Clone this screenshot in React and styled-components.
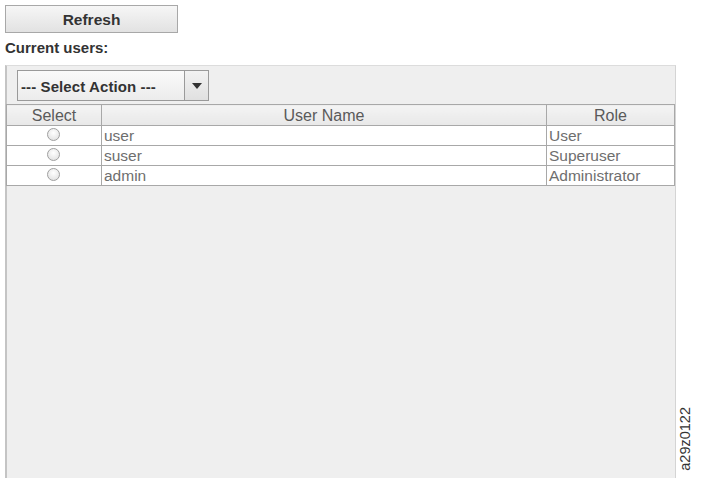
import React from "react";
import styled, { createGlobalStyle } from "styled-components";

const Global = createGlobalStyle`
  html, body { margin: 0; padding: 0; background: #fff; }
  body { font-family: "Liberation Sans", Arial, sans-serif; overflow: hidden; }
`;

const Page = styled.div`
  display: flex;
  width: 701px;
  height: 478px;
  box-sizing: border-box;
`;

const Main = styled.div`
  width: 676px;
  padding: 5px 0 0 5px;
  box-sizing: border-box;
  display: flex;
  flex-direction: column;
`;

const RefreshButton = styled.button`
  width: 173px;
  height: 28px;
  margin: 0;
  border: 1px solid #a8a8a8;
  background: linear-gradient(#f6f6f6, #e2e2e2);
  font: bold 15.5px "Liberation Sans", Arial, sans-serif;
  color: #333;
  padding: 2px 0 0;
`;

const Label = styled.div`
  font: bold 15px "Liberation Sans", Arial, sans-serif;
  color: #333;
  margin: 6px 0 0 0;
  height: 17px;
  line-height: 17px;
`;

const Panel = styled.div`
  margin-top: 9px;
  flex: 1;
  background: #efefef;
  border-top: 1px solid #dcdcdc;
  border-left: 2px solid #c4c4c4;
  border-right: 1px solid #d4d4d4;
  display: flex;
  flex-direction: column;
`;

const Toolbar = styled.div`
  padding: 4px 0 3px 10px;
  display: flex;
`;

const Select = styled.div`
  display: flex;
  height: 31px;
  box-sizing: border-box;
  border: 1px solid #9a9a9a;
  background: #f4f4f4;
`;

const SelectText = styled.div`
  width: 167px;
  box-sizing: border-box;
  padding: 1px 0 0 3px;
  display: flex;
  align-items: center;
  font: bold 15px "Liberation Sans", Arial, sans-serif;
  letter-spacing: 0.1px;
  color: #333;
  border-right: 1px solid #9a9a9a;
  background: linear-gradient(#fafafa, #ececec);
`;

const SelectArrow = styled.div`
  width: 23px;
  display: flex;
  align-items: center;
  justify-content: center;
  background: linear-gradient(#f2f2f2, #e0e0e0);
`;

const Table = styled.table`
  border-collapse: collapse;
  width: 669px;
  margin-left: -1px;
  font: 15.5px "Liberation Sans", Arial, sans-serif;
  color: #6e6e6e;
  table-layout: fixed;
`;

const Th = styled.th`
  font-weight: normal;
  font-size: 16px;
  height: 20px;
  line-height: 19px;
  padding: 0;
  border: 1px solid #a8a8a8;
  background: linear-gradient(#f4f4f4, #e8e8e8);
  color: #5a5a5a;
  text-align: center;
  width: ${(p) => p.$w || "auto"};
`;

const Td = styled.td`
  height: 19px;
  padding: 0 0 0 2px;
  border: 1px solid #a8a8a8;
  background: #fff;
  text-align: ${(p) => (p.$center ? "center" : "left")};
  line-height: 19px;
  white-space: nowrap;
  overflow: hidden;
`;

const Radio = styled.span`
  display: inline-block;
  width: 11px;
  height: 11px;
  border-radius: 50%;
  border: 1px solid #a0a0a0;
  background: radial-gradient(circle at 50% 35%, #fff, #ddd);
  vertical-align: middle;
  margin: -4px 0 0 -3px;
`;

const Side = styled.div`
  flex: 1;
  display: flex;
  align-items: flex-end;
  padding: 0 0 7px 1px;
`;

const Figure = styled.div`
  writing-mode: vertical-rl;
  transform: rotate(180deg);
  font: 14.5px "Liberation Sans", Arial, sans-serif;
  color: #333;
`;

const users = [
  { name: "user", role: "User" },
  { name: "suser", role: "Superuser" },
  { name: "admin", role: "Administrator" },
];

export default function App() {
  return (
    <>
      <Global />
      <Page>
        <Main>
          <RefreshButton>Refresh</RefreshButton>
          <Label>Current users:</Label>
          <Panel>
            <Toolbar>
              <Select>
                <SelectText>--- Select Action ---</SelectText>
                <SelectArrow>
                  <svg width="10" height="6" viewBox="0 0 10 6">
                    <path d="M0 0 H10 L5 6 Z" fill="#333" />
                  </svg>
                </SelectArrow>
              </Select>
            </Toolbar>
            <Table>
              <thead>
                <tr>
                  <Th $w="94px">Select</Th>
                  <Th>User Name</Th>
                  <Th $w="127px">Role</Th>
                </tr>
              </thead>
              <tbody>
                {users.map((u) => (
                  <tr key={u.name}>
                    <Td $center>
                      <Radio />
                    </Td>
                    <Td>{u.name}</Td>
                    <Td>{u.role}</Td>
                  </tr>
                ))}
              </tbody>
            </Table>
          </Panel>
        </Main>
        <Side>
          <Figure>a29z0122</Figure>
        </Side>
      </Page>
    </>
  );
}
